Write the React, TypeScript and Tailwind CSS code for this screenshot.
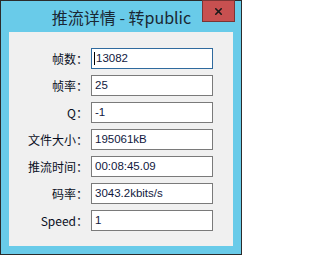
import { X } from 'lucide-react'

const rows = [
    { label: '帧数：', value: '13082', focused: true },
    { label: '帧率：', value: '25' },
    { label: 'Q：', value: '-1' },
    { label: '文件大小：', value: '195061kB' },
    { label: '推流时间：', value: '00:08:45.09' },
    { label: '码率：', value: '3043.2kbits/s' },
    { label: 'Speed：', value: '1' },
]

export default function App() {
    return (
        <div className="w-[242px] h-[255px] border border-[#2b2b2b] bg-[#69cbe9] flex flex-col px-[8px] pb-[8px] font-['Noto_Sans_CJK_SC',sans-serif]">
            <div className="relative h-[31px] flex items-center justify-center">
                <span className="text-[16px] leading-none text-[#1a2733] pl-[1px]">推流详情 - 转public</span>
                <div className="absolute top-[-1px] right-[-2px] w-[33px] h-[22px] bg-[#c75050] border border-[#7a3434] flex items-center justify-center">
                    <X size={11} strokeWidth={3.5} className="text-[#1a1a1a]" />
                </div>
            </div>
            <div className="flex-1 bg-[#f0f0f0] pt-[16px] flex flex-col gap-[6px]">
                {rows.map((r) => (
                    <div key={r.label} className="flex items-center h-[21px]">
                        <div className="w-[79px] text-right text-[12px] leading-none text-[#0a0f1e]">
                            {r.label}
                        </div>
                        <div
                            className={`ml-[3px] w-[122px] h-[21px] bg-white border flex items-center pl-[2px] ${
                                r.focused ? 'border-[#2f6a9e]' : 'border-[#7a7a7a]'
                            }`}
                        >
                            {r.focused && <span className="w-[1px] h-[13px] bg-black" />}
                            <span className="text-[11.5px] leading-none text-[#101840] font-['Liberation_Sans',sans-serif] pl-[1px]">
                                {r.value}
                            </span>
                        </div>
                    </div>
                ))}
            </div>
        </div>
    )
}
